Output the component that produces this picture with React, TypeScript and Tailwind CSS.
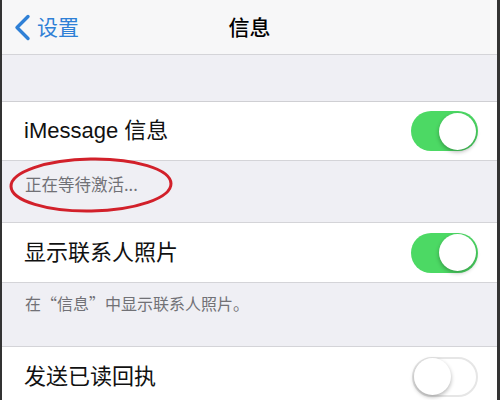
import React from 'react';

const FONT = { fontFamily: '"Liberation Sans", "Noto Sans CJK SC", sans-serif' };
const CJK = { fontFamily: '"Noto Sans CJK SC", sans-serif' };

function Toggle({ on }: { on: boolean }) {
  return on ? (
    <div className="flex h-[40px] w-[67px] items-center justify-end rounded-full bg-[#4cd964] pr-[2px]">
      <div className="h-[37px] w-[37px] rounded-full bg-white shadow-[0_2px_4px_rgba(0,0,0,0.3)]" />
    </div>
  ) : (
    <div className="flex h-[40px] w-[66px] items-center justify-start rounded-full border-2 border-[#e6e6e6] bg-white">
      <div className="h-[37px] w-[37px] rounded-full bg-white shadow-[0_2px_4px_rgba(0,0,0,0.3)]" />
    </div>
  );
}

function Row({ label, on, h }: { label: string; on: boolean; h: string }) {
  return (
    <div className={`flex items-center justify-between bg-white pl-[22px] pr-[19px] ${h}`}>
      <span className="text-[22px] leading-none text-[#111]">{label}</span>
      <Toggle on={on} />
    </div>
  );
}

export default function App() {
  return (
    <div className="h-[400px] w-[500px] overflow-hidden bg-[#333] pl-[2px] pr-[3px]" style={FONT}>
      <div className="relative h-full bg-[#efeff4]">
        {/* Nav bar */}
        <div className="relative flex h-[55px] items-center border-b border-[#d4d4d8] bg-[#f7f7f8]">
          <div className="flex items-center gap-[6px] pl-[11px] text-[#2f80d6]">
            <svg width="18" height="27" viewBox="0 0 18 27" fill="none">
              <path d="M15 2.5 L4 13.5 L15 24.5" stroke="currentColor" strokeWidth="3.4" strokeLinecap="round" strokeLinejoin="round" />
            </svg>
            <span className="text-[21px] leading-none">设置</span>
          </div>
          <div className="pointer-events-none absolute inset-x-0 top-0 flex h-[54px] items-center justify-center">
            <span className="text-[21px] font-medium leading-none text-black">信息</span>
          </div>
        </div>

        <div className="h-[47px] border-b border-[#cfcfd3]" />

        <div className="border-b border-[#d4d4d8]">
          <Row label="iMessage 信息" on h="h-[58px]" />
        </div>
        <div className="h-[62px] border-b border-[#d4d4d8] pl-[23px] pt-[11px]" style={CJK}>
          <span className="text-[16.5px] text-[#717176]">正在等待激活...</span>
        </div>

        <div className="border-b border-[#d4d4d8]">
          <Row label="显示联系人照片" on h="h-[59px]" />
        </div>
        <div className="h-[64px] border-b border-[#d4d4d8] pl-[23px] pt-[8px]" style={CJK}>
          <span className="text-[16px] text-[#717176]">在“信息”中显示联系人照片。</span>
        </div>

        <Row label="发送已读回执" on={false} h="h-[59px]" />

        {/* Red annotation ellipse */}
        <svg className="pointer-events-none absolute left-[6px] top-[155px]" width="170" height="60" viewBox="0 0 170 60">
          <ellipse cx="83" cy="30" rx="80" ry="26" fill="none" stroke="#d2202a" strokeWidth="3" transform="rotate(-1 83 30)" />
        </svg>
      </div>
    </div>
  );
}
